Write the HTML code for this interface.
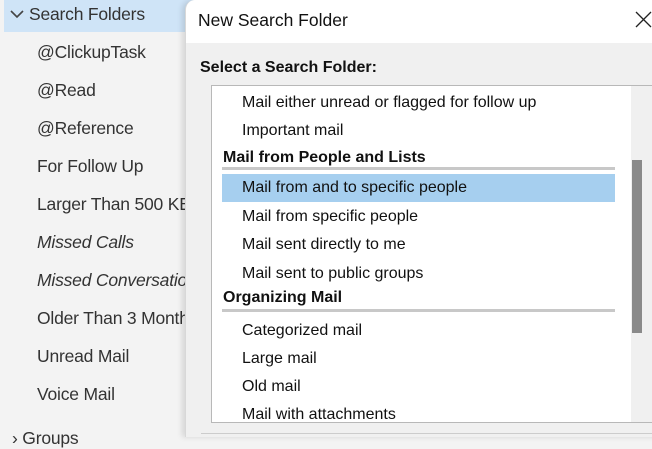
<!DOCTYPE html>
<html><head><style>
*{margin:0;padding:0;box-sizing:border-box}
body{width:652px;height:437px;overflow:hidden;background:#f3f3f3;font-family:"Liberation Sans",sans-serif;position:relative;color:#222}
.l{position:absolute;left:37px;font-size:17.5px;color:#333;white-space:nowrap;letter-spacing:-0.2px}
.i{font-style:italic}
#dlg{position:absolute;left:185px;top:0;width:480px;height:437px;background:#f0f0f0;border-left:1px solid #d8d8d8;border-top-left-radius:10px;box-shadow:-3px 0 6px rgba(0,0,0,.12);overflow:hidden}
#tb{position:absolute;left:0;top:0;width:100%;height:43px;background:#fff}
.d{position:absolute;font-size:16px;white-space:nowrap;color:#111}
.b{font-weight:bold}
</style></head><body>
<div style="position:absolute;left:4px;top:0;width:190px;height:32px;background:#cfe4f7"></div>
<svg style="position:absolute;left:10px;top:9px" width="14" height="10"><path d="M1 2 L7 8 L13 2" stroke="#444" stroke-width="1.6" fill="none"/></svg>
<div class="l" style="left:29px;top:4px">Search Folders</div>
<div class="l" style="top:42px">@ClickupTask</div>
<div class="l" style="top:80px">@Read</div>
<div class="l" style="top:118px">@Reference</div>
<div class="l" style="top:156px">For Follow Up</div>
<div class="l" style="top:194px">Larger Than 500 KB</div>
<div class="l i" style="top:232px">Missed Calls</div>
<div class="l i" style="top:270px">Missed Conversations</div>
<div class="l" style="top:308px">Older Than 3 Months</div>
<div class="l" style="top:346px">Unread Mail</div>
<div class="l" style="top:384px">Voice Mail</div>
<div class="l" style="left:12px;top:428px">› Groups</div>
<div id="dlg">
<div id="tb"></div>
<div class="d" style="left:12px;top:10px;font-size:17.5px">New Search Folder</div>
<svg style="position:absolute;left:449px;top:11px" width="17" height="17"><path d="M1 1L16 16M16 1L1 16" stroke="#222" stroke-width="1.3"/></svg>
<div class="d b" style="left:14px;top:59px">Select a Search Folder:</div>
<div style="position:absolute;left:25px;top:85px;width:450px;height:338px;background:#fff;border:1px solid #b8b8b8"></div>
<div style="position:absolute;left:445px;top:86px;width:22px;height:336px;background:#f0f0f0"></div>
<div style="position:absolute;left:446px;top:160px;width:10px;height:173px;background:#8a8a8a"></div>
<div style="position:absolute;left:36px;top:174px;width:393px;height:28px;background:#a6cfef"></div>
<div style="position:absolute;left:36px;top:167px;width:393px;height:3px;background:#c8c8c8"></div>
<div style="position:absolute;left:36px;top:309px;width:393px;height:3px;background:#c8c8c8"></div>
<div class="d" style="left:56px;top:94px">Mail either unread or flagged for follow up</div>
<div class="d" style="left:56px;top:122px">Important mail</div>
<div class="d b" style="left:37px;top:149px">Mail from People and Lists</div>
<div class="d" style="left:56px;top:179px">Mail from and to specific people</div>
<div class="d" style="left:56px;top:208px">Mail from specific people</div>
<div class="d" style="left:56px;top:236px">Mail sent directly to me</div>
<div class="d" style="left:56px;top:265px">Mail sent to public groups</div>
<div class="d b" style="left:37px;top:289px">Organizing Mail</div>
<div class="d" style="left:56px;top:322px">Categorized mail</div>
<div class="d" style="left:56px;top:350px">Large mail</div>
<div class="d" style="left:56px;top:378px">Old mail</div>
<div style="position:absolute;left:26px;top:405px;width:419px;height:17px;overflow:hidden"><div class="d" style="left:30px;top:1px">Mail with attachments</div></div>
<div style="position:absolute;left:15px;top:433px;width:460px;height:1px;background:#ccc"></div>
</div>
</body></html>
